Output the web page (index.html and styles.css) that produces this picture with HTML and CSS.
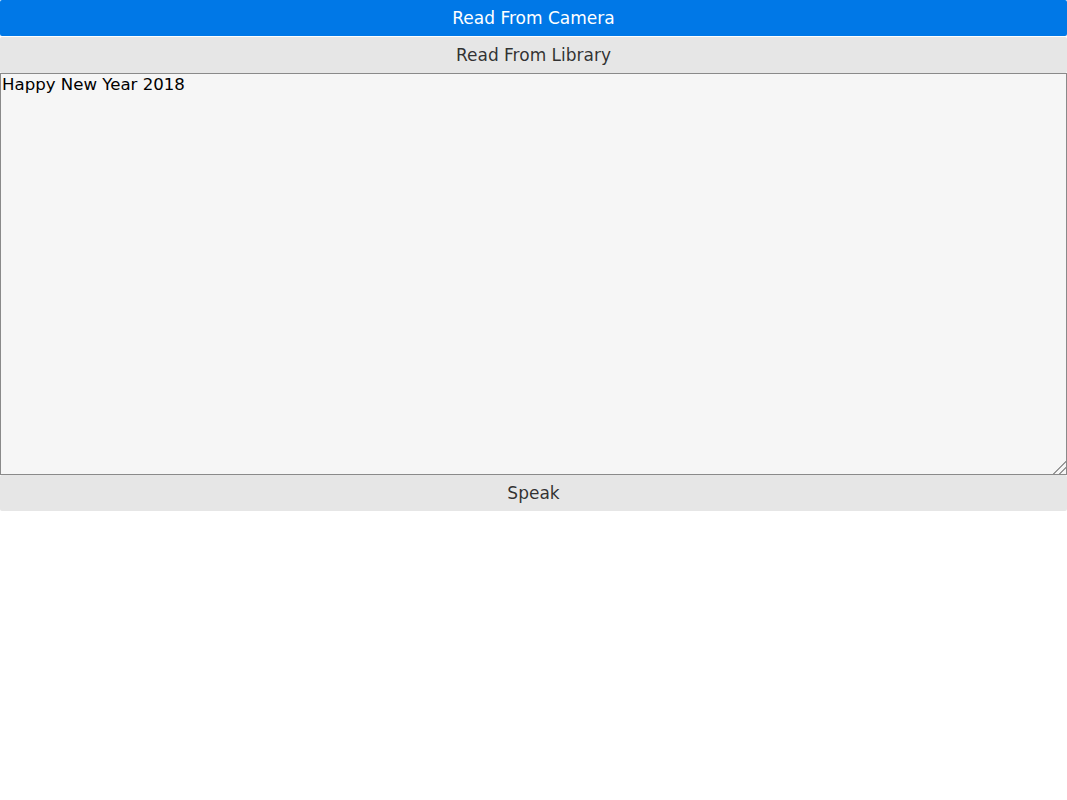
FILE: index.html
```html
<!DOCTYPE html>
<html lang="en">
<head>
  <meta charset="UTF-8" />
  <meta name="viewport" content="width=device-width, initial-scale=1.0" />
  <title>Text Reader</title>
  <link rel="stylesheet" href="styles.css">
</head>
<body>
  <button class="btn btn-primary">Read From Camera</button>
  <button class="btn">Read From Library</button>
  <textarea class="text-box">Happy New Year 2018</textarea>
  <button class="btn">Speak</button>
</body>
</html>
```

FILE: styles.css
```css
* { box-sizing: border-box; }
body {
  margin: 0;
  padding: 0;
  font-family: 'DejaVu Sans', sans-serif;
  background: #fff;
}
.btn {
  display: block;
  width: 100%;
  height: 36px;
  margin: 0;
  padding: 0 16px;
  font-family: 'DejaVu Sans', sans-serif;
  font-size: 17px;
  color: rgba(0, 0, 0, 0.8);
  background: #e6e6e6;
  border: none;
  border-radius: 2px;
  cursor: pointer;
}
.btn-primary {
  background: #0078e7;
  color: #fff;
}
.btn + .btn {
  margin-top: 1px;
}
.text-box {
  display: block;
  width: 100%;
  height: 402px;
  margin: 0;
  padding: 1px 1px;
  font-family: 'DejaVu Sans', sans-serif;
  font-size: 16.6px;
  color: #000;
  background: #f6f6f6;
  border: 1px solid #8a8a8a;
}
.text-box::-webkit-resizer {
  background: linear-gradient(135deg,
    transparent 0 55%, #999 55% 62%, transparent 62% 75%, #999 75% 82%, transparent 82%);
}
```
